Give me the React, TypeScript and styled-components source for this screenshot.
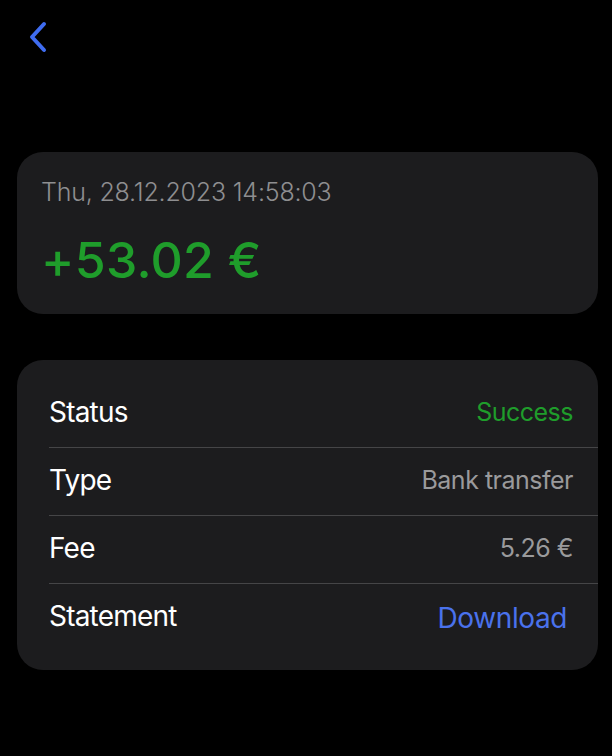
import styled, { createGlobalStyle } from 'styled-components';

const GlobalStyle = createGlobalStyle`
  html, body {
    margin: 0;
    padding: 0;
    background: #000;
  }
  body {
    font-family: Inter, "Liberation Sans", sans-serif;
    -webkit-font-smoothing: antialiased;
  }
`

const Page = styled.div`
  width: 612px;
  min-height: 756px;
  background: #000;
  padding: 0 14px 0 17px;
  box-sizing: border-box;
`
const TopBar = styled.div`
  height: 152px;
  display: flex;
  align-items: flex-start;
`
const BackButton = styled.button`
  margin: 20px 0 0 8px;
  padding: 0;
  background: none;
  border: none;
  width: 26px;
  height: 34px;
  display: flex;
  align-items: center;
  justify-content: center;
  cursor: pointer;
`
const Card = styled.div`
  background: #1c1c1e;
  border-radius: 26px;
  overflow: hidden;
`
const SummaryCard = styled(Card)`
  height: 162px;
  padding: 24px 24px 0;
  box-sizing: border-box;
`
const DateLine = styled.div`
  color: #8e8e90;
  font-size: 25px;
  font-weight: 300;
  letter-spacing: -0.2px;
  line-height: 32px;
`
const Amount = styled.div`
  margin-top: 24px;
  color: #1f9d2b;
  font-size: 50px;
  font-weight: 500;
  line-height: 56px;
  letter-spacing: 0.3px;
`
const DetailsCard = styled(Card)`
  margin-top: 46px;
  padding: 19px 0;
`
const Row = styled.div`
  height: 68px;
  box-sizing: border-box;
  margin-left: 32px;
  padding-right: 25px;
  display: flex;
  align-items: center;
  justify-content: space-between;
  border-top: 1px solid #454547;
  &:first-child {
    border-top: none;
  }
`
const Label = styled.span`
  color: #fff;
  font-size: 28px;
  font-weight: 400;
  letter-spacing: -0.8px;
  margin-top: -3px;
`
const Value = styled.span<{ $tone?: 'green' | 'gray' }>`
  color: ${props => props.$tone === 'green' ? '#1f9d2b' : '#9a9a9c'};
  font-size: 25px;
  font-weight: 400;
  letter-spacing: -0.5px;
  margin-top: -3px;
`
const LinkButton = styled.button`
  background: none;
  border: none;
  padding: 0 6px 0 0;
  color: #4a72ec;
  font-family: inherit;
  font-size: 28px;
  letter-spacing: -0.4px;
  cursor: pointer;
`

function App() {
  return (
    <>
      <GlobalStyle />
      <Page>
        <TopBar>
          <BackButton aria-label="Back">
            <svg width="20" height="32" viewBox="0 0 20 32" fill="none">
              <path d="M16 3 L4 16 L16 29" stroke="#3f6cf0" strokeWidth="4" strokeLinecap="round" strokeLinejoin="round" />
            </svg>
          </BackButton>
        </TopBar>
        <SummaryCard>
          <DateLine>Thu, 28.12.2023 14:58:03</DateLine>
          <Amount>+53.02 €</Amount>
        </SummaryCard>
        <DetailsCard>
          <Row>
            <Label>Status</Label>
            <Value $tone="green">Success</Value>
          </Row>
          <Row>
            <Label>Type</Label>
            <Value>Bank transfer</Value>
          </Row>
          <Row>
            <Label>Fee</Label>
            <Value>5.26 €</Value>
          </Row>
          <Row>
            <Label>Statement</Label>
            <LinkButton>Download</LinkButton>
          </Row>
        </DetailsCard>
      </Page>
    </>
  )
}

export default App;
